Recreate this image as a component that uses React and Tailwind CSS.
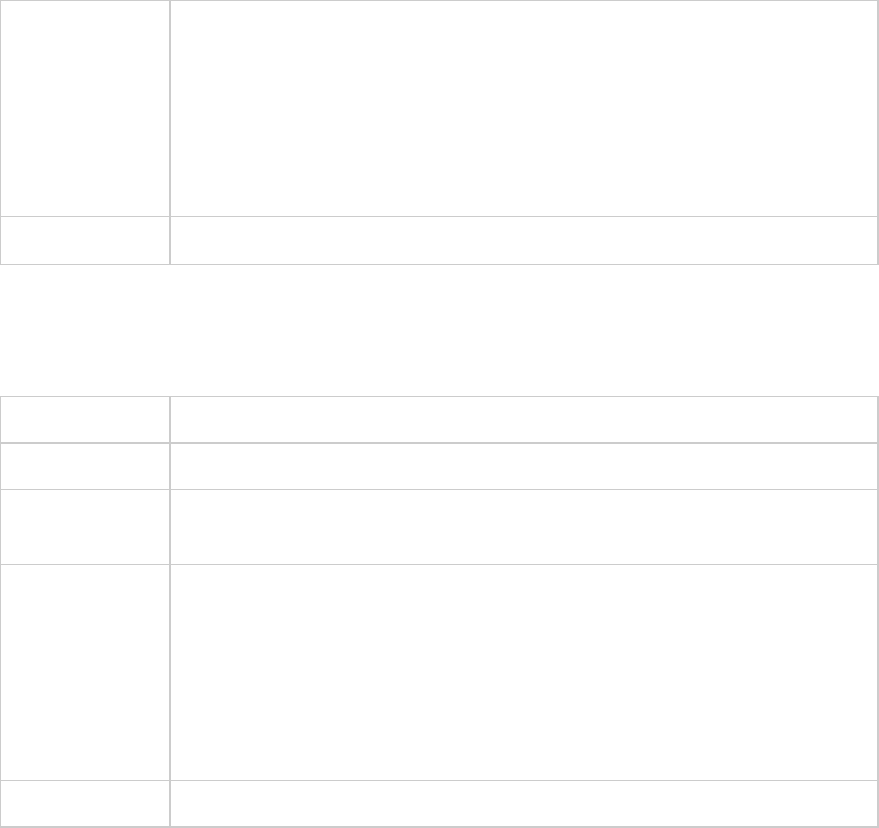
import React from 'react'

function Row({ h, last, thick }) {
  return (
    <div
      className={`flex ${h} ${last ? '' : thick ? 'border-b-2 border-[#cccccc]' : 'border-b border-[#cccccc]'}`}
    >
      <div className="w-[170px] shrink-0 border-r-2 border-[#cccccc]" />
      <div className="flex-1" />
    </div>
  )
}

export default function App() {
  return (
    <div className="w-[879px] bg-white font-['Liberation_Sans',sans-serif]">
      {/* First table */}
      <div className="border-t border-l border-r-2 border-b border-[#cccccc]">
        <Row h="h-[216px]" />
        <Row h="h-[47px]" last />
      </div>

      {/* Second table */}
      <div className="mt-[131px] border-t border-l border-r-2 border-b-2 border-[#cccccc]">
        <Row h="h-[47px]" thick />
        <Row h="h-[46px]" />
        <Row h="h-[75px]" />
        <Row h="h-[216px]" />
        <Row h="h-[45px]" last />
      </div>
    </div>
  )
}
